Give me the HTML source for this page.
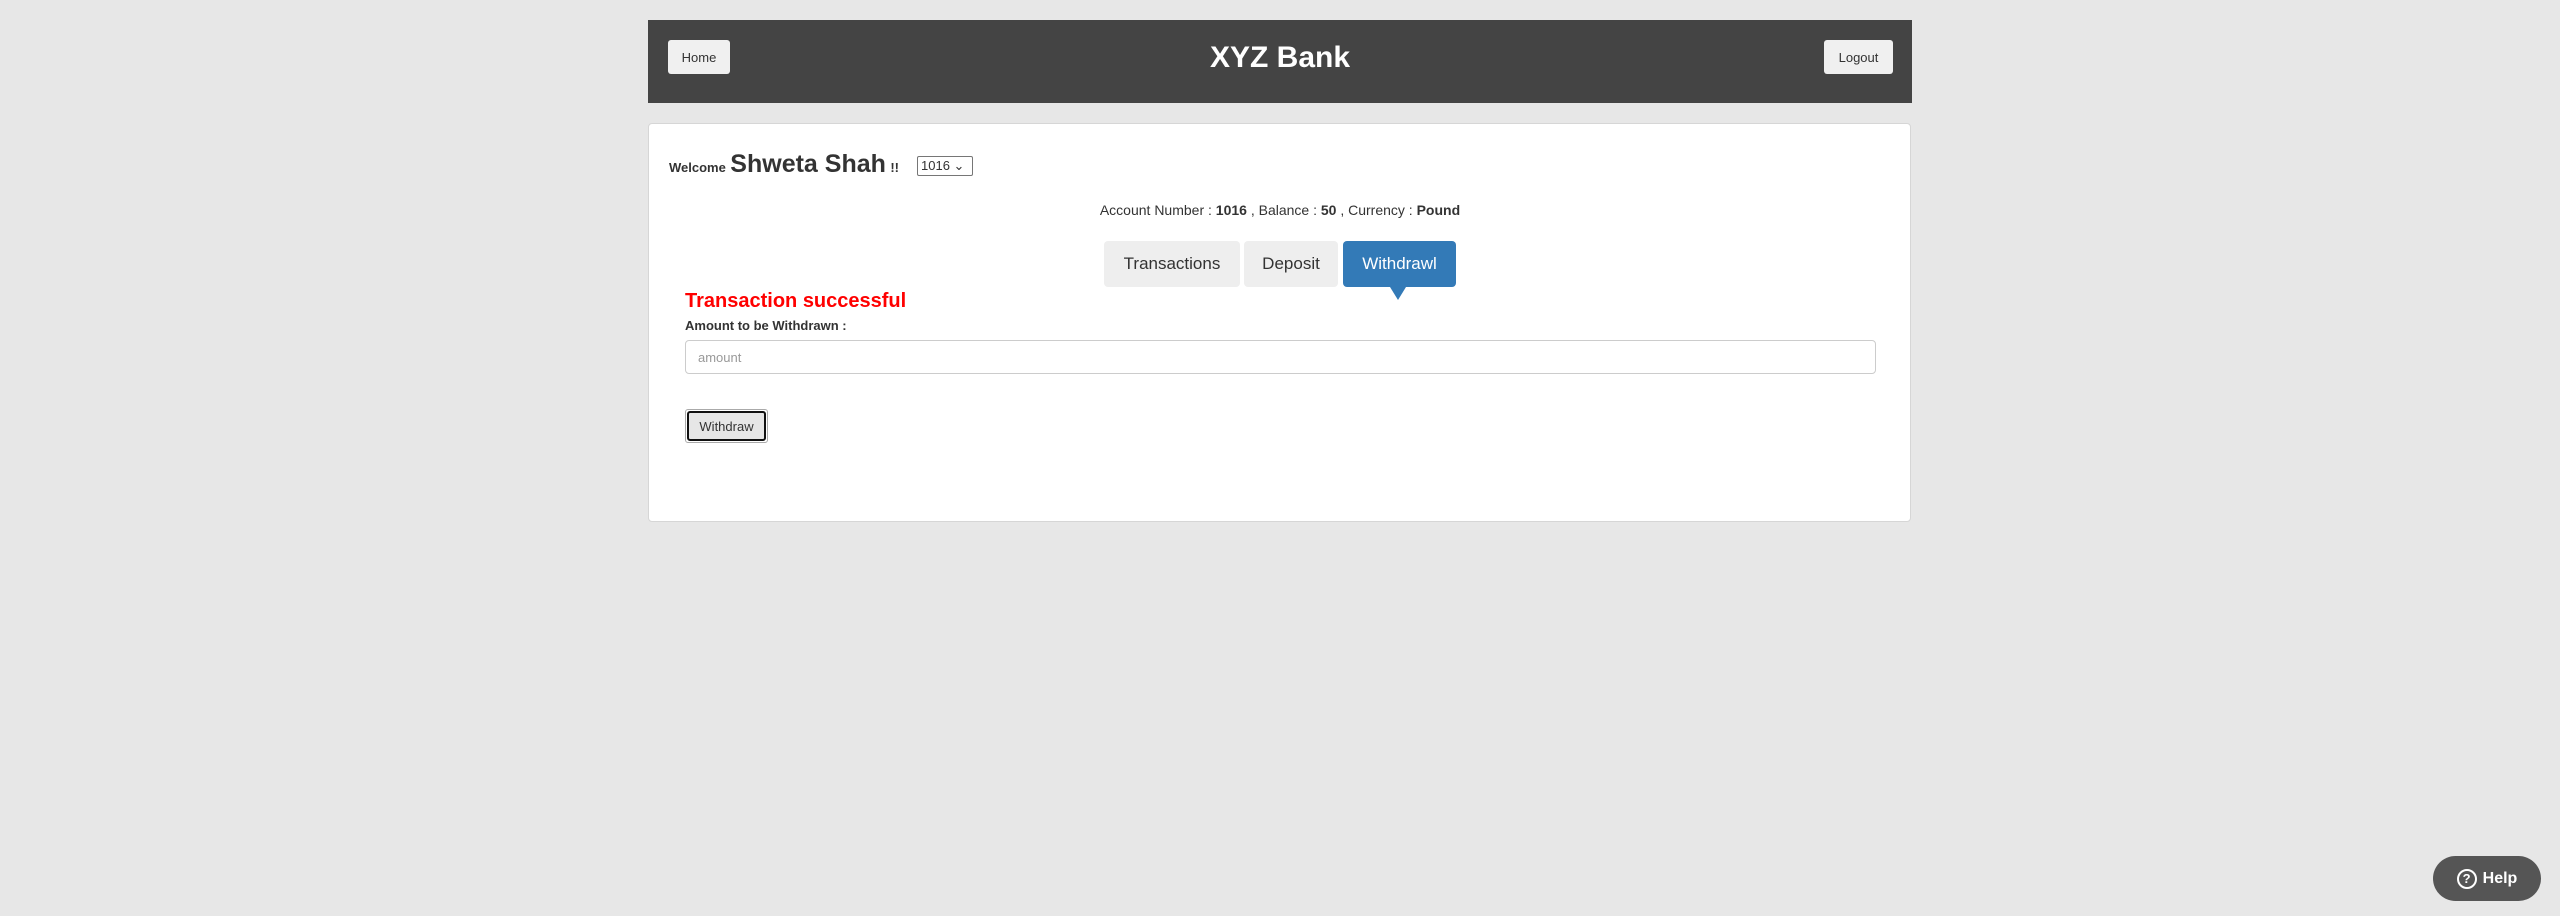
<!DOCTYPE html>
<html><head><meta charset="utf-8"><style>
*{box-sizing:border-box;margin:0;padding:0}
body{width:2560px;height:916px;background:#e7e7e7;font-family:"Liberation Sans",Arial,sans-serif;color:#333;position:relative;overflow:hidden}
.a{position:absolute}
.hdr{left:648px;top:20px;width:1264px;height:83px;background:#444}
.btn{background:#f0f0f0;border-radius:3px;font-size:13px;color:#333;display:flex;align-items:center;justify-content:center}
.title{left:648px;width:1264px;top:40px;text-align:center;color:#fff;font-weight:bold;font-size:30px;line-height:36px}
.panel{left:648px;top:123px;width:1263px;height:399px;background:#fff;border:1px solid #d6d6d6;border-radius:4px}
.tab{top:241px;height:46px;border-radius:4px;font-size:17px;display:flex;align-items:center;justify-content:center;background:#eee;color:#333}
</style></head><body>
<div class="a hdr"></div>
<div class="a btn" style="left:668px;top:40px;width:62px;height:34px">Home</div>
<div class="a btn" style="left:1824px;top:40px;width:69px;height:34px">Logout</div>
<div class="a title">XYZ Bank</div>
<div class="a panel"></div>
<div class="a" style="left:669px;top:150px;font-weight:bold;white-space:nowrap"><span style="font-size:13px">Welcome</span> <span style="font-size:25px">Shweta Shah</span> <span style="font-size:13px">!!</span></div>
<div class="a" style="left:917px;top:156px;width:56px;height:20px;border:1px solid #767676;border-radius:2px;font-size:13px;padding-left:3px;line-height:18px">1016 &#8964;</div>
<div class="a" style="left:648px;width:1264px;top:202px;text-align:center;font-size:14px">Account Number : <b>1016</b> , Balance : <b>50</b> , Currency : <b>Pound</b></div>
<div class="a tab" style="left:1104px;width:136px">Transactions</div>
<div class="a tab" style="left:1244px;width:94px">Deposit</div>
<div class="a tab" style="left:1343px;width:113px;background:#337ab7;color:#fff">Withdrawl</div>
<div class="a" style="left:1390px;top:287px;width:0;height:0;border-left:8px solid transparent;border-right:8px solid transparent;border-top:13px solid #337ab7"></div>
<div class="a" style="left:685px;top:289px;color:#f00;font-weight:bold;font-size:20px;line-height:24px">Transaction successful</div>
<div class="a" style="left:685px;top:318px;font-weight:bold;font-size:13px">Amount to be Withdrawn :</div>
<div class="a" style="left:685px;top:340px;width:1191px;height:34px;border:1px solid #ccc;border-radius:4px;font-size:13px;color:#999;padding:9px 12px">amount</div>
<div class="a" style="left:685px;top:409px;width:83px;height:34px;border:1px solid #aaa;border-radius:3px;padding:1px"><div style="width:100%;height:100%;border:2px solid #111;border-radius:3px;background:#e6e6e6;font-size:13px;display:flex;align-items:center;justify-content:center">Withdraw</div></div>
<div class="a" style="left:2433px;top:856px;width:108px;height:45px;border-radius:23px;background:#555;color:#fff;font-weight:bold;font-size:16px;display:flex;align-items:center;justify-content:center;gap:6px"><span style="width:20px;height:20px;border:2px solid #fff;border-radius:50%;font-size:13px;display:flex;align-items:center;justify-content:center">?</span>Help</div>
</body></html>
